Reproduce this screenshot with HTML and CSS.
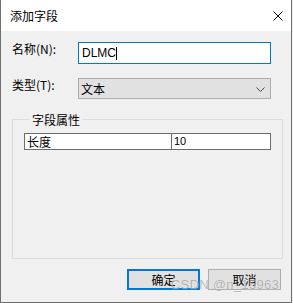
FILE: index.html
```html
<!DOCTYPE html>
<html>
<head>
<meta charset="utf-8">
<link rel="stylesheet" href="styles.css">
</head>
<body>
<div class="window">
  <div class="titlebar">
    <span class="title">添加字段</span>
    <svg class="close" width="10" height="10" viewBox="0 0 10 10"><path d="M0.5 0.5 L9.5 9.5 M9.5 0.5 L0.5 9.5" stroke="#000" stroke-width="1" fill="none"/></svg>
  </div>
  <div class="content">
    <div class="form">
      <label class="lbl">名称(N):</label>
      <div class="input"><span>DLMC</span><span class="caret"></span></div>
      <label class="lbl lbl2">类型(T):</label>
      <div class="select"><span>文本</span>
        <svg class="chev" width="9" height="5" viewBox="0 0 9 5"><path d="M0.5 0.5 L4.5 4.5 L8.5 0.5" stroke="#444" stroke-width="1" fill="none"/></svg>
      </div>
    </div>
    <fieldset class="group">
      <legend>字段属性</legend>
      <div class="table">
        <div class="cell name">长度</div>
        <div class="cell val">10</div>
      </div>
    </fieldset>
    <div class="buttons">
      <div class="btn primary">确定</div>
      <div class="btn">取消</div>
      <span class="watermark">CSDN @n_15963</span>
    </div>
  </div>
</div>
</body>
</html>
```

FILE: styles.css
```css
html, body {
  margin: 0;
  padding: 0;
  background: #f0f0f0;
}
body {
  font-family: "Noto Sans CJK SC", "Liberation Sans", sans-serif;
  font-size: 12px;
  color: #000;
}
.window {
  width: 290px;
  height: 302px;
  border-left: 1px solid #6f6f6f;
  border-right: 1px solid #6f6f6f;
  border-bottom: 1px solid #6f6f6f;
  background: #f0f0f0;
  display: flex;
  flex-direction: column;
}
.titlebar {
  height: 31px;
  background: #fff;
  display: flex;
  align-items: center;
  justify-content: space-between;
  padding: 0 8px 0 9px;
  flex: none;
}
.title {
  font-size: 12px;
  line-height: 12px;
  margin-top: 1px;
}
.close {
  margin-top: 0px;
  margin-right: 0px;
}
.content {
  padding: 11px 9px 0 11px;
  flex: 1;
  display: flex;
  flex-direction: column;
}
.form {
  display: grid;
  grid-template-columns: 66px 193px;
  grid-template-rows: 22px 22px;
  row-gap: 14px;
}
.lbl {
  line-height: 14px;
}
.input {
  box-sizing: border-box;
  border: 1px solid #0078d7;
  background: #fff;
  display: flex;
  align-items: center;
  padding-left: 3px;
  font-family: "Liberation Sans", sans-serif;
  font-size: 12px;
}
.caret {
  display: inline-block;
  width: 1px;
  height: 13px;
  background: #000;
}
.select {
  box-sizing: border-box;
  height: 21px;
  border: 1px solid #adadad;
  background: #e1e1e1;
  display: flex;
  align-items: center;
  justify-content: space-between;
  padding: 0 5px 0 2px;
}
.chev {
  margin-top: 1px;
}
.group {
  margin: 13px 0 0 0;
  padding: 7px 11px 0 11px;
  border: 1px solid #dcdcdc;
  height: 146px;
  box-sizing: border-box;
  width: 271px;
  min-width: 0;
}
.group legend {
  padding: 0 3px;
  margin-left: 5px;
  line-height: 13px;
}
.table {
  display: grid;
  grid-template-columns: 147px 98px;
  border: 1px solid #6d6d6d;
  background: #fff;
  height: 17px;
  box-sizing: border-box;
}
.cell {
  line-height: 15px;
  padding-left: 2px;
}
.cell.name {
  border-right: 1px solid #6d6d6d;
}
.cell.val {
  font-family: "Liberation Sans", sans-serif;
  font-size: 11px;
}
.buttons {
  position: relative;
  display: flex;
  justify-content: flex-end;
  gap: 8px;
  margin-top: 10px;
  padding-right: 1px;
}
.btn {
  box-sizing: border-box;
  width: 73px;
  height: 21px;
  border: 1px solid #adadad;
  background: #e1e1e1;
  display: flex;
  align-items: center;
  justify-content: center;
}
.btn.primary {
  border: 2px solid #0078d7;
}
.watermark {
  position: absolute;
  right: 3px;
  top: 8px;
  font-family: "Liberation Sans", sans-serif;
  font-size: 13px;
  color: rgba(110, 110, 110, 0.5);
  text-shadow: 0 0 1px rgba(255,255,255,0.8);
  letter-spacing: 0.3px;
}
```
